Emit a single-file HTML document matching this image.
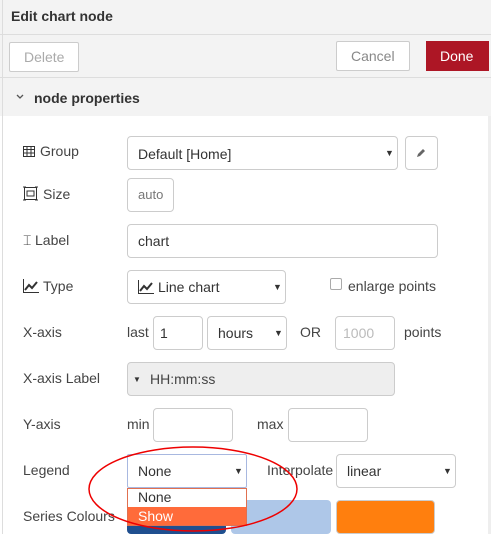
<!DOCTYPE html>
<html><head><style>
body{margin:0;width:491px;height:534px;overflow:hidden;background:#fff;font-family:"Liberation Sans",sans-serif;font-size:14px;color:#333;position:relative}
.a{position:absolute}
.box{position:absolute;box-sizing:border-box;border:1px solid #ccc;border-radius:4px;background:#fff}
.t{position:absolute;line-height:16px;white-space:nowrap}
.arr{position:absolute;font-size:9px;color:#333}
</style></head><body>
<div class="a" style="left:0;top:0;width:491px;height:116px;background:#f3f3f3"></div>
<div class="a" style="left:2px;top:0;width:1px;height:534px;background:#ddd"></div>
<div class="a" style="left:0;top:34px;width:491px;height:1px;background:#ddd"></div>
<div class="a" style="left:0;top:77px;width:491px;height:1px;background:#ddd"></div>
<div class="a" style="left:488px;top:116px;width:3px;height:418px;background:#eee"></div>
<div class="t" style="left:11px;top:8px;font-weight:bold;color:#333">Edit chart node</div>
<div class="box" style="left:9px;top:42px;width:70px;height:30px;border-radius:2px"></div>
<div class="t" style="left:24px;top:49px;color:#aaa">Delete</div>
<div class="box" style="left:336px;top:41px;width:74px;height:30px;border-radius:2px"></div>
<div class="t" style="left:351px;top:48px;color:#888">Cancel</div>
<div class="a" style="left:426px;top:41px;width:63px;height:30px;background:#ad1625"></div>
<div class="t" style="left:440px;top:48px;color:#fff">Done</div>
<svg class="a" style="left:16px;top:94px" width="8" height="6"><path d="M1 1L4 4L7 1" stroke="#555" stroke-width="1.3" fill="none"/></svg>
<div class="t" style="left:34px;top:90px;font-weight:bold;color:#333">node properties</div>

<svg class="a" style="left:23px;top:146px" width="12" height="11"><rect x="0.5" y="0.5" width="11" height="10" fill="none" stroke="#333"/><path d="M0 3.5H12M0 7H12M4 0V11M8 0V11" stroke="#333"/></svg>
<div class="t" style="left:40px;top:143px;color:#444">Group</div>
<div class="box" style="left:127px;top:136px;width:271px;height:34px"></div>
<div class="t" style="left:138px;top:146px">Default [Home]</div>
<div class="arr" style="left:385px;top:148px">&#9660;</div>
<div class="box" style="left:405px;top:136px;width:33px;height:34px"></div>
<svg class="a" style="left:415px;top:147px" width="12" height="12"><path d="M2 10L3 7L8 2L10 4L5 9Z" fill="#666"/></svg>

<svg class="a" style="left:23px;top:186px" width="15" height="15"><rect x="1.5" y="1.5" width="12" height="12" fill="none" stroke="#333"/><rect x="4" y="5" width="7" height="5" fill="none" stroke="#333"/><path d="M0 1H3M0 14H3M12 1H15M12 14H15" stroke="#333"/></svg>
<div class="t" style="left:43px;top:186px;color:#444">Size</div>
<div class="box" style="left:127px;top:178px;width:47px;height:34px"></div>
<div class="t" style="left:138px;top:187px;font-size:13px;color:#777">auto</div>

<div class="t" style="left:23px;top:232px;color:#444">&#x2336;</div>
<div class="t" style="left:35px;top:232px;color:#444">Label</div>
<div class="box" style="left:127px;top:224px;width:311px;height:34px"></div>
<div class="t" style="left:138px;top:233px">chart</div>

<svg class="a" style="left:23px;top:279px" width="16" height="14"><path d="M0.5 0V13.5H16" stroke="#333" fill="none"/><path d="M2 11L6 6L9 9L14 3" stroke="#333" stroke-width="2" fill="none"/></svg>
<div class="t" style="left:43px;top:278px;color:#444">Type</div>
<div class="box" style="left:127px;top:270px;width:159px;height:34px"></div>
<svg class="a" style="left:138px;top:280px" width="16" height="14"><path d="M0.5 0V13.5H16" stroke="#333" fill="none"/><path d="M2 11L6 6L9 9L14 3" stroke="#333" stroke-width="2" fill="none"/></svg>
<div class="t" style="left:158px;top:279px">Line chart</div>
<div class="arr" style="left:273px;top:282px">&#9660;</div>
<div class="box" style="left:330px;top:278px;width:12px;height:12px;border-radius:2px;border-color:#aaa"></div>
<div class="t" style="left:348px;top:278px;color:#444">enlarge points</div>

<div class="t" style="left:23px;top:324px;color:#444">X-axis</div>
<div class="t" style="left:127px;top:324px;color:#444">last</div>
<div class="box" style="left:153px;top:316px;width:50px;height:34px"></div>
<div class="t" style="left:160px;top:325px">1</div>
<div class="box" style="left:207px;top:316px;width:80px;height:34px"></div>
<div class="t" style="left:218px;top:325px">hours</div>
<div class="arr" style="left:274px;top:328px">&#9660;</div>
<div class="t" style="left:300px;top:324px;color:#444">OR</div>
<div class="box" style="left:335px;top:316px;width:60px;height:34px"></div>
<div class="t" style="left:343px;top:325px;color:#bbb">1000</div>
<div class="t" style="left:404px;top:324px;color:#444">points</div>

<div class="t" style="left:23px;top:370px;color:#444">X-axis Label</div>
<div class="box" style="left:127px;top:362px;width:268px;height:34px;background:#eee"></div>
<div class="arr" style="left:133px;top:375px;font-size:8px">&#9660;</div>
<div class="t" style="left:150px;top:371px;color:#444">HH:mm:ss</div>

<div class="t" style="left:23px;top:416px;color:#444">Y-axis</div>
<div class="t" style="left:127px;top:416px;color:#444">min</div>
<div class="box" style="left:153px;top:408px;width:80px;height:34px"></div>
<div class="t" style="left:257px;top:416px;color:#444">max</div>
<div class="box" style="left:288px;top:408px;width:80px;height:34px"></div>

<div class="t" style="left:23px;top:462px;color:#444">Legend</div>
<div class="box" style="left:127px;top:454px;width:120px;height:34px;border-color:#a8b8e0;border-radius:2px"></div>
<div class="t" style="left:138px;top:463px">None</div>
<div class="arr" style="left:234px;top:466px">&#9660;</div>
<div class="t" style="left:267px;top:462px;color:#444">Interpolate</div>
<div class="box" style="left:336px;top:454px;width:120px;height:34px"></div>
<div class="t" style="left:347px;top:463px">linear</div>
<div class="arr" style="left:443px;top:466px">&#9660;</div>

<div class="t" style="left:23px;top:508px;color:#444">Series Colours</div>
<div class="a" style="left:127px;top:500px;width:99px;height:34px;background:#1f4f8f;border-radius:4px"></div>
<div class="a" style="left:231px;top:500px;width:100px;height:34px;background:#aec7e8;border-radius:4px"></div>
<div class="a" style="left:336px;top:500px;width:99px;height:34px;background:#ff7f0e;border-radius:4px;box-sizing:border-box;border:1px solid #ccc"></div>

<div class="a" style="left:127px;top:488px;width:120px;height:38px;background:#fff;border:1px solid #e07050;box-sizing:border-box"></div>
<div class="t" style="left:138px;top:489px">None</div>
<div class="a" style="left:128px;top:507px;width:118px;height:18px;background:#ff6b3a"></div>
<div class="t" style="left:138px;top:508px;color:#fff">Show</div>

<svg class="a" style="left:0;top:0" width="491" height="534"><ellipse cx="193" cy="489" rx="104" ry="42" fill="none" stroke="#e00" stroke-width="1.5"/></svg>
</body></html>
